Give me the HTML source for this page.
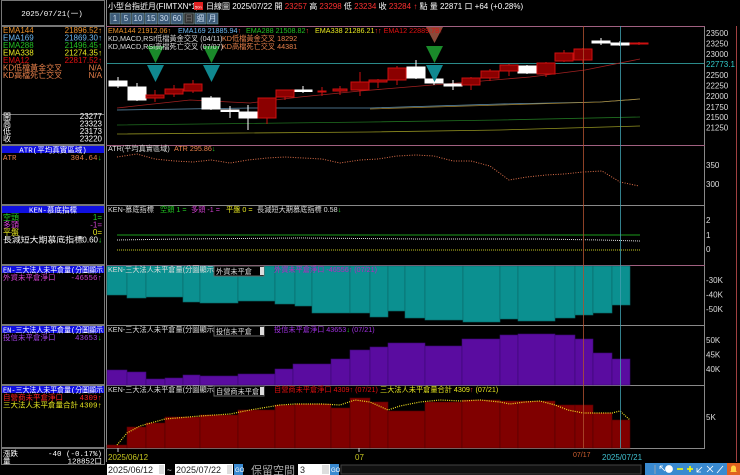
<!DOCTYPE html>
<html><head><meta charset="utf-8"><style>
html,body{margin:0;padding:0;background:#000;width:740px;height:475px;overflow:hidden}
svg{display:block}
text{font-family:"Liberation Sans","Noto Sans CJK TC",sans-serif;font-size:8px}
.m{font-family:"Liberation Mono","Noto Sans CJK TC",monospace;font-size:7.5px}
.l{font-size:7.2px}
</style></head><body>
<svg width="740" height="475" viewBox="0 0 740 475" xmlns="http://www.w3.org/2000/svg">
<rect width="740" height="475" fill="#000"/>
<g stroke="#777" fill="none" stroke-width="1">
<rect x="1.5" y="0.5" width="103" height="25"/>
<rect x="1.5" y="26.5" width="103" height="88"/>
<rect x="1.5" y="114.5" width="103" height="30"/>
<rect x="1.5" y="145.5" width="103" height="59"/>
<rect x="1.5" y="205.5" width="103" height="59"/>
<rect x="1.5" y="265.5" width="103" height="59"/>
<rect x="1.5" y="325.5" width="103" height="59"/>
<rect x="1.5" y="385.5" width="103" height="62"/>
<rect x="1.5" y="448.5" width="103" height="16"/>
</g>
<text x="52" y="16" fill="#fff" text-anchor="middle" class="m">2025/07/21(一)</text>
<g class="m">
<text x="3" y="33" fill="#e8902a">EMA144</text><text x="102" y="33" fill="#e8902a" text-anchor="end">21896.52↑</text>
<text x="3" y="40.5" fill="#6cb8f0">EMA169</text><text x="102" y="40.5" fill="#6cb8f0" text-anchor="end">21869.30↑</text>
<text x="3" y="48" fill="#22c022">EMA288</text><text x="102" y="48" fill="#22c022" text-anchor="end">21496.45↑</text>
<text x="3" y="55.5" fill="#e8e820">EMA338</text><text x="102" y="55.5" fill="#e8e820" text-anchor="end">21274.35↑</text>
<text x="3" y="63" fill="#e01010">EMA12</text><text x="102" y="63" fill="#e01010" text-anchor="end">22817.52↑</text>
<text x="3" y="70.5" fill="#e8804a">KD低檔黃金交叉</text><text x="102" y="70.5" fill="#e8804a" text-anchor="end">N/A</text>
<text x="3" y="78" fill="#e8804a">KD高檔死亡交叉</text><text x="102" y="78" fill="#e8804a" text-anchor="end">N/A</text>
<text x="3" y="119" fill="#fff">開</text><text x="102" y="119" fill="#fff" text-anchor="end">23277</text>
<text x="3" y="126.5" fill="#fff">高</text><text x="102" y="126.5" fill="#fff" text-anchor="end">23323</text>
<text x="3" y="134" fill="#fff">低</text><text x="102" y="134" fill="#fff" text-anchor="end">23173</text>
<text x="3" y="141.5" fill="#fff">收</text><text x="102" y="141.5" fill="#fff" text-anchor="end">23220</text>
</g>
<rect x="2" y="146" width="102" height="7" fill="#1010e0"/>
<text x="53" y="152.5" fill="#fff" text-anchor="middle" class="m">ATR(平均真實區域)</text>
<text x="3" y="160" fill="#e8804a" class="m">ATR</text><text x="102" y="160" fill="#e8804a" text-anchor="end" class="m">304.64<tspan fill="#2c2">↓</tspan></text>
<rect x="2" y="206" width="102" height="7" fill="#1010e0"/>
<text x="53" y="212.5" fill="#fff" text-anchor="middle" class="m">KEN-慕底指標</text>
<g class="m">
<text x="3" y="220" fill="#2c2">空頭</text><text x="102" y="220" fill="#2c2" text-anchor="end">1=</text>
<text x="3" y="227.5" fill="#d040d0">多頭</text><text x="102" y="227.5" fill="#d040d0" text-anchor="end">-1=</text>
<text x="3" y="235" fill="#e8e820">平盤</text><text x="102" y="235" fill="#e8e820" text-anchor="end">0=</text>
<text x="3" y="242.5" fill="#fff" textLength="80" lengthAdjust="spacingAndGlyphs">長減短大期慕底指標</text><text x="102" y="242.5" fill="#fff" text-anchor="end">0.60<tspan fill="#2c2">↓</tspan></text>
</g>
<rect x="2" y="266" width="102" height="7" fill="#1010e0"/>
<text x="3" y="272.5" fill="#fff" class="m" textLength="100" lengthAdjust="spacingAndGlyphs">EN-三大法人未平倉量(分圖顯示</text>
<text x="3" y="280" fill="#d040d0" class="m">外資未平倉淨口</text><text x="102" y="280" fill="#d040d0" text-anchor="end" class="m">-46556↑</text>
<rect x="2" y="326" width="102" height="7" fill="#1010e0"/>
<text x="3" y="332.5" fill="#fff" class="m" textLength="100" lengthAdjust="spacingAndGlyphs">EN-三大法人未平倉量(分圖顯示</text>
<text x="3" y="340" fill="#a040e0" class="m">投信未平倉淨口</text><text x="102" y="340" fill="#a040e0" text-anchor="end" class="m">43653<tspan fill="#2c2">↓</tspan></text>
<rect x="2" y="386" width="102" height="7" fill="#1010e0"/>
<text x="3" y="392.5" fill="#fff" class="m" textLength="100" lengthAdjust="spacingAndGlyphs">EN-三大法人未平倉量(分圖顯示</text>
<text x="3" y="400" fill="#ff2020" class="m">自營商未平倉淨口</text><text x="102" y="400" fill="#ff2020" text-anchor="end" class="m">4309↑</text>
<text x="3" y="407.5" fill="#e8e820" class="m" textLength="75" lengthAdjust="spacingAndGlyphs">三大法人未平倉量合計</text><text x="102" y="407.5" fill="#e8e820" text-anchor="end" class="m">4309↑</text>
<text x="3" y="456" fill="#fff" class="m">漲跌</text><text x="102" y="456" fill="#fff" text-anchor="end" class="m">-40 (-0.17%)</text>
<text x="3" y="463.5" fill="#fff" class="m">量</text><text x="102" y="463.5" fill="#fff" text-anchor="end" class="m">128852口</text>

<text x="108" y="9" fill="#fff">小型台指近月(FIMTXN*1)</text>
<rect x="194" y="2" width="9" height="8" fill="#e02020"/><text x="195" y="8.5" fill="#fff" style="font-size:4px">50n</text>
<text x="206" y="9" fill="#fff">日線圖  2025/07/22  開 <tspan fill="#ff3030">23257</tspan>  高 <tspan fill="#ff3030">23298</tspan>  低 <tspan fill="#ff3030">23234</tspan>  收 <tspan fill="#ff3030">23284</tspan> <tspan fill="#ff3030">↑</tspan> 點  量 22871 口  +64 (+0.28%)</text>
<g fill="#3c5a78" stroke="#8aa" stroke-width="0.5">
<rect x="110" y="13" width="10" height="11"/><rect x="121" y="13" width="10" height="11"/><rect x="132" y="13" width="12" height="11"/><rect x="145" y="13" width="12" height="11"/><rect x="158" y="13" width="12" height="11"/><rect x="171" y="13" width="12" height="11"/><rect x="184" y="13" width="10" height="11" fill="#333"/><rect x="195" y="13" width="11" height="11"/><rect x="207" y="13" width="11" height="11"/>
</g>
<g fill="#cde" text-anchor="middle">
<text x="115" y="21">1</text><text x="126" y="21">5</text><text x="138" y="21">10</text><text x="151" y="21">15</text><text x="164" y="21">30</text><text x="177" y="21">60</text><text x="189" y="21" fill="#777">日</text><text x="200.5" y="21">週</text><text x="212.5" y="21">月</text>
</g>

<g stroke="#888" stroke-width="1" fill="none">
<line x1="106.5" y1="0" x2="106.5" y2="462"/>
<line x1="704.5" y1="26" x2="704.5" y2="448"/>
<line x1="106" y1="26.5" x2="705" y2="26.5" stroke="#a06080"/>
<line x1="106" y1="145.5" x2="705" y2="145.5" stroke="#a06080"/>
<line x1="106" y1="205.5" x2="705" y2="205.5"/>
<line x1="106" y1="265.5" x2="705" y2="265.5" stroke="#a06080"/>
<line x1="106" y1="325.5" x2="705" y2="325.5"/>
<line x1="106" y1="385.5" x2="705" y2="385.5"/>
<line x1="106" y1="448.5" x2="705" y2="448.5"/>
<line x1="736.5" y1="26" x2="736.5" y2="462" stroke="#a04040"/>
</g>

<line x1="107" y1="63.5" x2="704" y2="63.5" stroke="#2a8a8a"/>
<polyline fill="none" stroke="#a02020" stroke-width="0.8" points="117,108 190,100 250,103 300,97 360,91 420,86 470,82 530,77 585,70 640,59"/>
<polyline fill="none" stroke="#6090b0" stroke-width="0.8" points="117,110 250,108 370,108 500,104 600,102 640,99"/>
<polyline fill="none" stroke="#a08030" stroke-width="0.8" points="370,109 500,105 600,102 640,99"/>
<polyline fill="none" stroke="#207020" stroke-width="0.8" points="117,125 370,122 500,120 640,117"/>
<polyline fill="none" stroke="#909020" stroke-width="0.8" points="117,134 370,132 500,130 640,126"/>

<g>
<g stroke="#fff" fill="#fff">
<line x1="118" y1="77" x2="118" y2="88"/><rect x="109" y="81" width="18" height="5"/>
<line x1="137" y1="83" x2="137" y2="101"/><rect x="128" y="87" width="18" height="13"/>
<line x1="211" y1="96" x2="211" y2="110"/><rect x="202" y="98" width="18" height="11"/>
<line x1="230" y1="106" x2="230" y2="118"/><rect x="221" y="110" width="18" height="1.5"/>
<line x1="248" y1="105" x2="248" y2="130"/><rect x="239" y="112" width="18" height="6"/>
<line x1="303" y1="86" x2="303" y2="93"/><rect x="294" y="90" width="18" height="1.5"/>
<line x1="416" y1="60" x2="416" y2="79"/><rect x="407" y="67" width="18" height="11"/>
<line x1="434" y1="77" x2="434" y2="85"/><rect x="425" y="79" width="18" height="4"/>
<line x1="453" y1="80" x2="453" y2="90"/><rect x="444" y="84" width="18" height="2"/>
<line x1="527" y1="65" x2="527" y2="74"/><rect x="518" y="66" width="18" height="7"/>
<line x1="601" y1="38" x2="601" y2="45"/><rect x="592" y="41" width="18" height="2"/>
<line x1="620" y1="41" x2="620" y2="46"/><rect x="611" y="43" width="18" height="2"/>
</g>
<g stroke="#cc1010" fill="#8b0000">
<line x1="155" y1="90" x2="155" y2="102"/><rect x="146" y="95" width="18" height="3"/>
<line x1="174" y1="85" x2="174" y2="97"/><rect x="165" y="89" width="18" height="5"/>
<line x1="193" y1="80" x2="193" y2="93"/><rect x="184" y="84" width="18" height="7"/>
<line x1="267" y1="98" x2="267" y2="124"/><rect x="258" y="98" width="18" height="20"/>
<line x1="285" y1="90" x2="285" y2="100"/><rect x="276" y="90" width="18" height="7"/>
<line x1="322" y1="87" x2="322" y2="96"/><rect x="318" y="91" width="8" height="1"/>
<line x1="340" y1="86" x2="340" y2="95"/><rect x="333" y="89" width="14" height="2"/>
<line x1="360" y1="72" x2="360" y2="96"/><rect x="351" y="82" width="18" height="8"/>
<line x1="378" y1="79" x2="378" y2="88"/><rect x="369" y="80" width="18" height="2"/>
<line x1="397" y1="66" x2="397" y2="85"/><rect x="388" y="68" width="18" height="12"/>
<line x1="471" y1="77" x2="471" y2="90"/><rect x="462" y="78" width="18" height="7"/>
<line x1="490" y1="69" x2="490" y2="81"/><rect x="481" y="71" width="18" height="7"/>
<line x1="509" y1="64" x2="509" y2="76"/><rect x="500" y="65" width="18" height="6"/>
<line x1="546" y1="62" x2="546" y2="77"/><rect x="537" y="63" width="18" height="11"/>
<line x1="564" y1="50" x2="564" y2="62"/><rect x="555" y="53" width="18" height="8"/>
<line x1="583" y1="48" x2="583" y2="63"/><rect x="574" y="49" width="18" height="11"/>
<line x1="639" y1="42" x2="639" y2="45"/><rect x="630" y="43" width="18" height="1"/>
</g>
</g>
<g>
<polygon points="147,46 164,46 155.5,63" fill="#1a8a2a"/><polygon points="147,65 164,65 155.5,82" fill="#108890"/>
<polygon points="203,46 220,46 211.5,63" fill="#1a8a2a"/><polygon points="203,65 220,65 211.5,82" fill="#108890"/>
<polygon points="426,27 443,27 434.5,43" fill="#8a4a3a"/><polygon points="426,46 443,46 434.5,63" fill="#1a8a2a"/><polygon points="426,65 443,65 434.5,82" fill="#108890"/>
</g>
<g class="l">
<text x="108" y="33" fill="#e8902a" class="l">EMA144 21912.06↑</text>
<text x="178" y="33" fill="#6cb8f0" class="l">EMA169 21885.94<tspan fill="#f33">↑</tspan></text>
<text x="246" y="33" fill="#22c022" class="l">EMA288 21508.82<tspan fill="#f33">↑</tspan></text>
<text x="315" y="33" fill="#e8e820" class="l">EMA338 21286.21<tspan fill="#f33">↑</tspan></text>
<text x="378" y="33" fill="#e01010" class="l"><tspan fill="#f33">↑</tspan>  EMA12 22889.78↑</text>
<text x="108" y="41" fill="#ddd" class="l">KD,MACD,RSI低檔黃金交叉  (04/11)</text>
<text x="222" y="41" fill="#e8804a" class="l">KD低檔黃金交叉 18292</text>
<text x="108" y="49" fill="#ddd" class="l">KD,MACD,RSI高檔死亡交叉  (07/07)</text>
<text x="222" y="49" fill="#e8804a" class="l">KD高檔死亡交叉 44381</text>
</g>

<g fill="#ddd">
<text x="706" y="36">23500</text><text x="706" y="46.5">23250</text><text x="706" y="57">23000</text><text x="706" y="67" fill="#3cc">22773.1</text><text x="706" y="78">22500</text><text x="706" y="88.5">22250</text><text x="706" y="99">22000</text><text x="706" y="110">21750</text><text x="706" y="120">21500</text><text x="706" y="130.5">21250</text>
<text x="706" y="168">350</text><text x="706" y="187">300</text>
<text x="706" y="223">2</text><text x="706" y="238">1</text><text x="706" y="252">0</text>
<text x="706" y="283">-30K</text><text x="706" y="297.5">-40K</text><text x="706" y="312">-50K</text>
<text x="706" y="343">50K</text><text x="706" y="357.5">45K</text><text x="706" y="372">40K</text>
<text x="706" y="420">5K</text>
</g>

<polyline fill="none" stroke="#e0704a" stroke-width="1" stroke-dasharray="1,1.5" points="117,157 137,154 155,159 175,161 193,162 211,160 230,163 248,160 267,158 285,157 303,158 322,159 340,163 360,160 378,159 397,156 416,155 434,156 453,161 471,161 490,166 509,180 527,177 546,175 564,174 583,172 602,171 620,182 639,186"/>
<text x="108" y="151" fill="#ddd" class="l">ATR(平均真實區域)</text><text x="174" y="151" fill="#e8804a" class="l">ATR 295.86<tspan fill="#2c2">↓</tspan></text>

<line x1="117" y1="235" x2="640" y2="235" stroke="#1c9c1c"/>
<polyline fill="none" stroke="#ddd" stroke-dasharray="1,1" points="117,240 180,239 300,238 420,239 540,239 600,240 640,241"/>
<line x1="117" y1="250" x2="640" y2="250" stroke="#c8c820" stroke-dasharray="1,1"/>
<text x="108" y="212" fill="#ddd" class="l">KEN-慕底指標</text>
<text x="160" y="212" fill="#2c2" class="l">空頭 1 =</text><text x="191" y="212" fill="#d040d0" class="l">多頭 -1 =</text><text x="226" y="212" fill="#e8e820" class="l">平盤 0 =</text><text x="257" y="212" fill="#ddd" class="l">長減短大期慕底指標 0.58<tspan fill="#2c2">↓</tspan></text>

<g fill="#0b9090" stroke="#0a6868" stroke-width="0.6">
<rect x="107" y="266" width="20" height="29"/><rect x="127" y="266" width="19" height="32"/><rect x="146" y="266" width="37" height="31"/><rect x="183" y="266" width="17" height="36"/><rect x="200" y="266" width="38" height="37"/><rect x="238" y="266" width="37" height="35"/><rect x="275" y="266" width="20" height="38"/><rect x="295" y="266" width="17" height="40"/><rect x="312" y="266" width="38" height="47"/><rect x="350" y="266" width="20" height="47"/><rect x="370" y="266" width="18" height="51"/><rect x="388" y="266" width="17" height="45"/><rect x="405" y="266" width="20" height="52"/><rect x="425" y="266" width="38" height="54"/><rect x="463" y="266" width="37" height="56"/><rect x="500" y="266" width="18" height="53"/><rect x="518" y="266" width="37" height="55"/><rect x="555" y="266" width="20" height="52"/><rect x="575" y="266" width="18" height="49"/><rect x="593" y="266" width="19" height="47"/><rect x="612" y="266" width="18" height="39"/>
</g>
<text x="108" y="272" fill="#ddd" class="l">KEN-三大法人未平倉量(分圖顯示)</text>
<rect x="214" y="266" width="50" height="10" fill="#000" stroke="#666"/><text x="216" y="274" fill="#ddd" class="l">外資未平倉</text><rect x="260" y="267" width="4" height="8" fill="#ddd"/>
<text x="274" y="272" fill="#c020c0" class="l">外資未平倉淨口 -46556↑ (07/21)</text>

<g fill="#5a0ca0" stroke="#3a0870" stroke-width="0.6">
<rect x="107" y="370" width="20" height="15"/><rect x="127" y="372" width="19" height="13"/><rect x="146" y="379" width="19" height="6"/><rect x="165" y="378" width="18" height="7"/><rect x="183" y="375" width="17" height="10"/><rect x="200" y="376" width="38" height="9"/><rect x="238" y="374" width="37" height="11"/><rect x="275" y="369" width="18" height="16"/><rect x="293" y="364" width="38" height="21"/><rect x="331" y="359" width="19" height="26"/><rect x="350" y="350" width="20" height="35"/><rect x="370" y="347" width="18" height="38"/><rect x="388" y="343" width="37" height="42"/><rect x="425" y="346" width="37" height="39"/><rect x="462" y="339" width="38" height="46"/><rect x="500" y="335" width="18" height="50"/><rect x="518" y="334" width="37" height="51"/><rect x="555" y="335" width="20" height="50"/><rect x="575" y="339" width="18" height="46"/><rect x="593" y="353" width="19" height="32"/><rect x="612" y="359" width="18" height="26"/>
</g>
<text x="108" y="332" fill="#ddd" class="l">KEN-三大法人未平倉量(分圖顯示)</text>
<rect x="214" y="326" width="50" height="10" fill="#000" stroke="#666"/><text x="216" y="334" fill="#ddd" class="l">投信未平倉</text><rect x="260" y="327" width="4" height="8" fill="#ddd"/>
<text x="274" y="332" fill="#a030e0" class="l">投信未平倉淨口 43653<tspan fill="#2c2">↓</tspan> (07/21)</text>

<g fill="#800000" stroke="#500000" stroke-width="0.6">
<rect x="107" y="445" width="20" height="3"/><rect x="127" y="427" width="19" height="21"/><rect x="146" y="423" width="19" height="25"/><rect x="165" y="417" width="35" height="31"/><rect x="200" y="415" width="38" height="33"/><rect x="238" y="410" width="37" height="38"/><rect x="275" y="405" width="20" height="43"/><rect x="295" y="404" width="36" height="44"/><rect x="331" y="408" width="19" height="40"/><rect x="350" y="398" width="20" height="50"/><rect x="370" y="402" width="18" height="46"/><rect x="388" y="411" width="37" height="37"/><rect x="425" y="402" width="37" height="46"/><rect x="462" y="400" width="38" height="48"/><rect x="500" y="401" width="18" height="47"/><rect x="518" y="401" width="37" height="47"/><rect x="555" y="405" width="20" height="43"/><rect x="575" y="405" width="18" height="43"/><rect x="593" y="413" width="19" height="35"/><rect x="612" y="420" width="18" height="28"/>
</g>
<polyline fill="none" stroke="#f0e020" stroke-width="1.2" stroke-dasharray="1,1.2" points="117,445 127,433 140,426 165,419 200,416 230,414 250,410 280,405 295,404 322,404 340,405 355,400 370,402 388,410 400,406 420,402 440,400 462,401 480,400 500,402 510,404 525,402 540,401 555,405 568,410 583,413 600,413 612,413 620,411 630,420"/>
<text x="108" y="392" fill="#ddd" class="l">KEN-三大法人未平倉量(分圖顯示)</text>
<rect x="214" y="386" width="50" height="10" fill="#000" stroke="#666"/><text x="216" y="394" fill="#ddd" class="l">自營商未平倉</text><rect x="260" y="387" width="4" height="8" fill="#ddd"/>
<text x="274" y="392" fill="#e01010" class="l">自營商未平倉淨口 4309↑ (07/21)</text>
<text x="380" y="392" fill="#e8e820" class="l">三大法人未平倉量合計 4309<tspan fill="#f33">↑</tspan> (07/21)</text>

<line x1="583.5" y1="26" x2="583.5" y2="448" stroke="#b05030" stroke-width="0.8"/>
<line x1="620.5" y1="26" x2="620.5" y2="448" stroke="#40a0b0" stroke-width="0.8"/>

<line x1="118" y1="448" x2="118" y2="452" stroke="#ccc"/><line x1="359" y1="448" x2="359" y2="452" stroke="#ccc"/>
<text x="108" y="460" fill="#c8c820">2025/06/12</text>
<text x="355" y="460" fill="#c8c820">07</text>
<text x="573" y="457" fill="#d06030" style="font-size:7px">07/17</text>
<text x="602" y="460" fill="#40c0d0">2025/07/21</text>

<rect x="106" y="463" width="634" height="12" fill="#000"/>
<rect x="107" y="464" width="58" height="11" fill="#fff"/><text x="108" y="473" fill="#222" style="font-size:9px">2025/06/12</text><rect x="159" y="465" width="5" height="9" fill="#ddd"/>
<text x="167" y="473" fill="#ddd">~</text>
<rect x="175" y="464" width="58" height="11" fill="#fff"/><text x="176" y="473" fill="#222" style="font-size:9px">2025/07/22</text><rect x="227" y="465" width="5" height="9" fill="#ddd"/>
<rect x="234" y="464" width="9" height="11" fill="#3a8ad0"/><text x="235" y="472" fill="#fff" style="font-size:6px">GO</text>
<text x="251" y="474" fill="#aaa" style="font-size:11px">保留空間</text>
<rect x="298" y="464" width="32" height="11" fill="#fff"/><text x="300" y="473" fill="#222" style="font-size:9px">3</text><rect x="322" y="465" width="7" height="9" fill="#ddd"/>
<rect x="330" y="464" width="9" height="11" fill="#3a8ad0"/><text x="331" y="472" fill="#fff" style="font-size:6px">GO</text>
<rect x="341" y="465" width="300" height="9" fill="#111" stroke="#444"/>
<rect x="645" y="463" width="95" height="12" fill="#3a8ad0"/>
<g stroke="#fff" stroke-width="0.8" fill="none">
<line x1="655" y1="465" x2="655" y2="474" stroke="#aaa"/>
<path d="M660 466 l5 5 M660 466 v3 M660 466 h3"/>
<circle cx="669" cy="469" r="3.5" fill="#fff"/>
<path d="M677 469 h6" stroke="#ff0" stroke-width="1.5"/>
<path d="M687 469 h6 M690 466 v6" stroke="#ff0" stroke-width="1.5"/>
<path d="M697 472 l5 -5 M697 468 v4 h4"/>
<path d="M707 466 l6 6 M713 466 l-6 6"/>
<path d="M717 473 l6 -7"/>
</g>
<rect x="727" y="463" width="13" height="12" fill="#e06020"/><path d="M730 472 h7 l-1 -1 v-3 a2.5 2.5 0 0 0 -5 0 v3 z" fill="#ffd040"/>
</svg>
</body></html>
